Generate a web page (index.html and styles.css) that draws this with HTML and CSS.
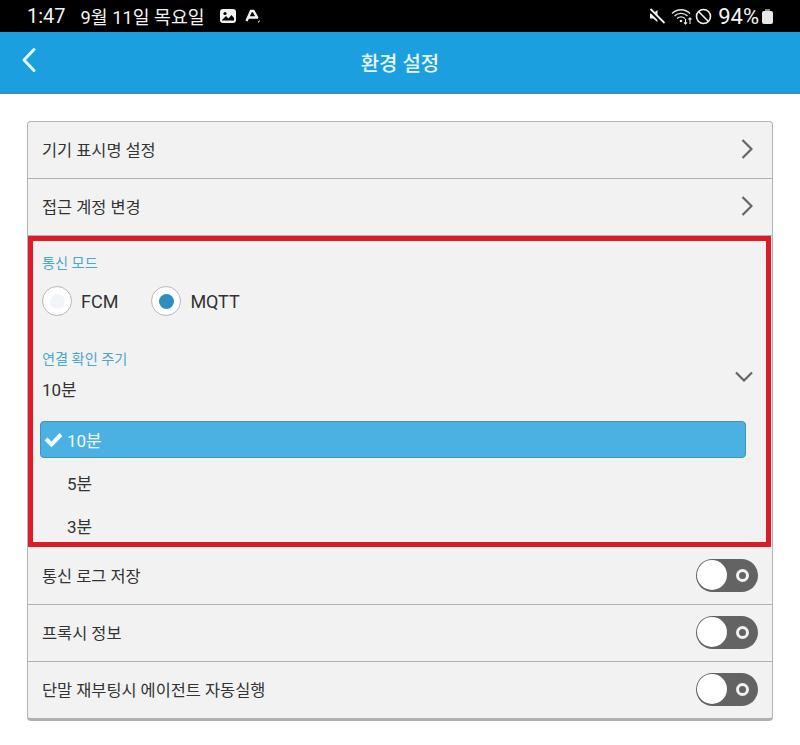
FILE: index.html
```html
<!DOCTYPE html>
<html lang="ko">
<head>
    <meta charset="UTF-8">
    <meta name="viewport" content="width=device-width, initial-scale=1.0">
    <title>환경 설정</title>
    <link rel="stylesheet" href="styles.css">
</head>
<body>
    <!-- Status bar -->
    <div class="status-bar">
        <div class="status-left">
            <span class="time">1:47</span>
            <span class="date">9월 11일 목요일</span>
            <svg class="status-icon" width="18" height="16" viewBox="0 0 18 16">
                <rect x="1" y="1" width="16" height="14" rx="3" fill="#f2f2f2"/>
                <circle cx="6" cy="5.5" r="1.6" fill="#000"/>
                <path d="M3 12l4-4 2.500 2.500L12.500 7 15 10v2.500H3z" fill="#000"/>
            </svg>
            <svg class="status-icon" width="16" height="16" viewBox="0 0 16 16">
                <path d="M1.500 13L6 3h2.500L12.500 10M3.500 9.500h9.500" fill="none" stroke="#f2f2f2" stroke-width="2.400"/>
                <path d="M13.500 14.500l1-2" stroke="#f2f2f2" stroke-width="1"/>
            </svg>
        </div>
        <div class="status-right">
            <svg width="18" height="18" viewBox="0 0 18 18">
                <path d="M2 6.500h3L9.500 3v12L5 11.500H2z" fill="#f2f2f2"/>
                <path d="M1.500 2.500l14 14" stroke="#000" stroke-width="3.500"/>
                <path d="M2.500 2l14 14" stroke="#f2f2f2" stroke-width="1.800"/>
            </svg>
            <svg class="wifi" width="22" height="18" viewBox="0 0 22 18">
                <path d="M1 6.500C6 1.500 14 1.500 19 6.500M3.500 9C7 5.500 13 5.500 16.500 9M6 11.500c2.500-2 5.500-2 8 0" fill="none" stroke="#e8e8e8" stroke-width="1.300"/>
                <circle cx="10" cy="14" r="1.300" fill="#e8e8e8"/>
                <path d="M14.500 12v5M13 15.500l1.500 1.500 1.500-1.500M19 17v-6M17.500 12.500l1.500-1.500 1.500 1.500" fill="none" stroke="#e8e8e8" stroke-width="1.100"/>
            </svg>
            <svg class="dnd" width="17" height="17" viewBox="0 0 17 17">
                <circle cx="8.500" cy="8.500" r="7" fill="none" stroke="#f2f2f2" stroke-width="1.600"/>
                <path d="M3.500 3.500l10 10" stroke="#f2f2f2" stroke-width="1.600"/>
            </svg>
            <span class="battery-text">94%</span>
            <div class="battery"></div>
        </div>
    </div>

    <!-- Header -->
    <header class="app-header">
        <svg class="back" width="16" height="26" viewBox="0 0 16 26">
            <path d="M13 2.500L3 13l10 10.500" fill="none" stroke="#e4f6fd" stroke-width="3" stroke-linecap="round" stroke-linejoin="round"/>
        </svg>
        <h1>환경 설정</h1>
    </header>

    <main class="content">
        <div class="panel">
            <div class="row">
                <span>기기 표시명 설정</span>
                <svg width="12" height="20" viewBox="0 0 12 20"><path d="M1.500 1l9 9-9 9" fill="none" stroke="#666" stroke-width="2.200"/></svg>
            </div>
            <div class="row">
                <span>접근 계정 변경</span>
                <svg width="12" height="20" viewBox="0 0 12 20"><path d="M1.500 1l9 9-9 9" fill="none" stroke="#666" stroke-width="2.200"/></svg>
            </div>

            <!-- Highlighted section -->
            <section class="highlight">
                <div class="field-label">통신 모드</div>
                <div class="radio-group">
                    <label class="radio"><span class="radio-dot"></span>FCM</label>
                    <label class="radio on"><span class="radio-dot"></span>MQTT</label>
                </div>
                <div class="select-head">
                    <div>
                        <div class="field-label">연결 확인 주기</div>
                        <div class="select-value">10분</div>
                    </div>
                    <svg class="select-arrow" width="18" height="11" viewBox="0 0 18 11"><path d="M1 1.500l8 8 8-8" fill="none" stroke="#666" stroke-width="2.200"/></svg>
                </div>
                <div class="option selected">
                    <svg width="19" height="15" viewBox="0 0 19 15"><path d="M2 7l5.500 5.500L17 2.500" fill="none" stroke="#f4fbfe" stroke-width="4"/></svg>
                    <span>10분</span>
                </div>
                <div class="option">5분</div>
                <div class="option">3분</div>
            </section>

            <div class="row">
                <span>통신 로그 저장</span>
                <div class="toggle"><span class="knob"></span><span class="off-mark"></span></div>
            </div>
            <div class="row">
                <span>프록시 정보</span>
                <div class="toggle"><span class="knob"></span><span class="off-mark"></span></div>
            </div>
            <div class="row last">
                <span>단말 재부팅시 에이전트 자동실행</span>
                <div class="toggle"><span class="knob"></span><span class="off-mark"></span></div>
            </div>
        </div>
    </main>
</body>
</html>
```

FILE: styles.css
```css
body {
    margin: 0;
    background-color: #ffffff;
    color: #333333;
    font-family: "Roboto", "Noto Sans CJK KR", sans-serif;
    font-size: 16.4px;
}

/* Status bar */
.status-bar {
    height: 32px;
    background-color: #000000;
    color: #f2f2f2;
    display: flex;
    justify-content: space-between;
    align-items: center;
    padding: 0 27px;
    font-size: 18.3px;
}

.status-left, .status-right {
    display: flex;
    align-items: center;
}

.time {
    margin-right: 15px;
    font-size: 20px;
}

.date {
    margin-right: 14px;
}

.status-icon {
    margin-right: 8px;
}

.wifi {
    margin-left: 5px;
}

.dnd {
    margin-left: 2px;
}

.battery-text {
    margin-left: 6px;
    font-size: 22px;
}

.battery {
    width: 11px;
    height: 13px;
    margin: 2px 0 0 3px;
    background-color: #e8e8e8;
    border-radius: 2px;
    position: relative;
}

/* Battery nub */
.battery::before {
    content: "";
    position: absolute;
    top: -2px;
    left: 3px;
    width: 5px;
    height: 2px;
    background-color: #8a8a8a;
}

/* Header */
.app-header {
    height: 60px;
    background-color: #1c9fdf;
    border-bottom: 2px solid #3a8fbf;
    display: flex;
    align-items: center;
    justify-content: center;
    position: relative;
}

.app-header h1 {
    margin: 0;
    color: #e9f6fc;
    font-size: 20px;
    font-weight: 500;
}

.back {
    position: absolute;
    left: 21px;
    top: 15px;
}

/* Panel */
.content {
    padding: 27px 27px 0;
}

.panel {
    background-color: #f2f2f2;
    border: 1px solid #b4b4b4;
    border-bottom: 3px solid #b0b0b0;
    border-radius: 4px;
}

.row {
    height: 54px;
    padding: 0 14px 2px;
    border-bottom: 1px solid #b0b0b0;
    display: flex;
    justify-content: space-between;
    align-items: center;
}

.row svg {
    margin-right: 5px;
}

.row.last {
    border-bottom: none;
}

/* Red box */
.highlight {
    height: 311px;
    box-sizing: border-box;
    margin: 0 1px 1px 0;
    padding: 11px 9px 0;
    border: 5px solid #dc1c28;
}

.field-label {
    color: #4aa8cf;
    font-size: 14.2px;
}

.radio-group {
    display: flex;
    gap: 33px;
    margin-top: 14px;
}

.radio {
    display: flex;
    align-items: center;
    gap: 9px;
    font-size: 18px;
}

.radio-dot {
    width: 30px;
    height: 30px;
    box-sizing: border-box;
    border: 1px solid #b8b8b8;
    border-radius: 50%;
    background-color: #ffffff;
    display: flex;
    align-items: center;
    justify-content: center;
}

.radio-dot::after {
    content: "";
    width: 15px;
    height: 15px;
    border-radius: 50%;
    background-color: #f1f5f9;
}

.radio.on .radio-dot::after {
    background-color: #2f8ebd;
}

.select-head {
    display: flex;
    justify-content: space-between;
    align-items: center;
    margin-top: 32px;
    padding-right: 4px;
}

.select-arrow {
    margin-top: 3px;
}

.select-value {
    margin-top: 8px;
    font-size: 17px;
}

.option {
    height: 43px;
    padding-left: 25px;
    display: flex;
    align-items: center;
    box-sizing: border-box;
    font-size: 17px;
}

.option.selected {
    height: 37px;
    margin: 20px 11px 3px -2px;
    padding-left: 3px;
    gap: 4px;
    color: #f4fbfe;
    background-color: #4bb1e3;
    border: 1px solid #3f93bd;
    border-radius: 4px;
}

/* Toggle */
.toggle {
    width: 62px;
    height: 33px;
    background-color: #636363;
    border-radius: 17px;
    display: flex;
    justify-content: space-between;
    align-items: center;
    padding-right: 9px;
    box-sizing: border-box;
}

.knob {
    width: 30px;
    height: 30px;
    margin-left: 1px;
    background-color: #ffffff;
    border-radius: 50%;
}

.off-mark {
    width: 13px;
    height: 13px;
    box-sizing: border-box;
    border: 3px solid #f1f1f1;
    border-radius: 50%;
}
```
